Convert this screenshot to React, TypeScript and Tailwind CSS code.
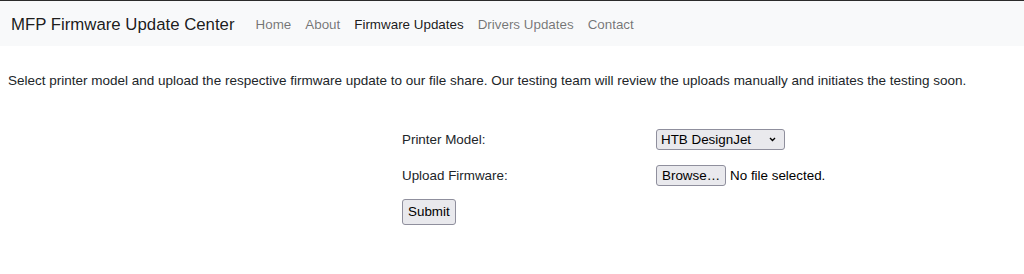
import React from 'react';

const links = [
  { label: 'Home', active: false },
  { label: 'About', active: false },
  { label: 'Firmware Updates', active: true },
  { label: 'Drivers Updates', active: false },
  { label: 'Contact', active: false },
];

const App = () => {
  return (
    <div className="min-h-[274px] bg-white font-['Liberation_Sans',Arial,sans-serif] text-[#212529]">
      <nav className="flex h-[46px] items-center border-t border-[#2b2b2b] bg-[#f8f9fa] pl-[11px] pt-[3px]">
        <span className="mr-[14px] text-[16.8px] text-black/90">MFP Firmware Update Center</span>
        <ul className="flex text-[13.4px]">
          {links.map((link) => (
            <li key={link.label} className="px-[7px]">
              <a className={link.active ? 'text-black/90' : 'text-black/55'}>{link.label}</a>
            </li>
          ))}
        </ul>
      </nav>

      <p className="mt-[25px] px-[8px] text-[13.5px] leading-[20px]">
        Select printer model and upload the respective firmware update to our file share. Our testing team will review the
        uploads manually and initiates the testing soon.
      </p>

      <form className="mt-[38px] pl-[402px] text-[13.4px] text-[#212529]">
        <div className="grid grid-cols-[254px_auto] items-center gap-y-[15px]">
          <label>Printer Model:</label>
          <div className="relative w-[129px]">
            <select className="h-[21px] w-full appearance-none rounded-[3px] border border-[#8f8f9d] bg-[#e9e9ed] pl-[4px] text-[13.4px] text-black">
              <option>HTB DesignJet</option>
            </select>
            <svg
              className="pointer-events-none absolute right-[9px] top-[8px]"
              width="7"
              height="5"
              viewBox="0 0 7 5"
              fill="none"
              stroke="black"
              strokeWidth="1.4"
            >
              <path d="M1 1l2.5 2.5L6 1" />
            </svg>
          </div>

          <label>Upload Firmware:</label>
          <div className="flex items-center">
            <span className="flex h-[21px] items-center rounded-[3px] border border-[#8f8f9d] bg-[#e9e9ed] px-[5px] text-black">
              Browse…
            </span>
            <span className="ml-[4px] text-black">No file selected.</span>
          </div>
        </div>

        <button
          type="button"
          className="mt-[13px] h-[26px] rounded-[3px] border border-[#8f8f9d] bg-[#e9e9ed] px-[5px] text-[13.4px] text-black"
        >
          Submit
        </button>
      </form>
    </div>
  );
};

export default App;
